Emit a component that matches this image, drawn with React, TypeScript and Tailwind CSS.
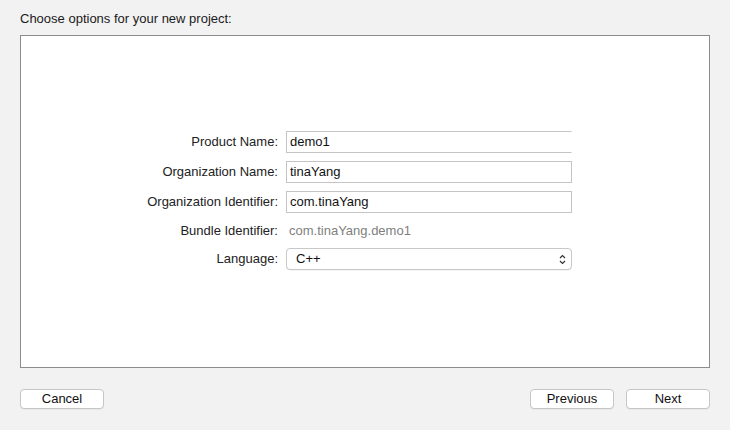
const FONT = "font-['Helvetica_Neue','Liberation_Sans',Arial,sans-serif]";

function Field({ label, value, clipRight }: { label: string; value: string; clipRight?: boolean }) {
  return (
    <>
      <div className="flex h-[22px] items-center justify-end text-[13px] text-[#222]">{label}</div>
      <div
        className={
          "flex h-[22px] items-center border border-[#c4c4c4] bg-white pl-[3px] text-[13px] text-[#111] " +
          (clipRight ? "border-r-transparent" : "")
        }
      >
        {value}
      </div>
    </>
  );
}

function UpDown() {
  return (
    <svg width="7" height="11" viewBox="0 0 7 11" fill="none" stroke="#333" strokeWidth="1.2">
      <path d="M1 4 L3.5 1.5 L6 4" />
      <path d="M1 7 L3.5 9.5 L6 7" />
    </svg>
  );
}

function MacButton({ children }: { children: React.ReactNode }) {
  return (
    <button className="flex h-[20px] w-[84px] items-center justify-center rounded-[4px] border border-[#c6c6c6] bg-white text-[13px] text-[#111] shadow-[0_0.5px_0_rgba(0,0,0,0.08)]">
      {children}
    </button>
  );
}

export default function App() {
  return (
    <div className={"flex h-[430px] w-[730px] flex-col bg-[#f2f2f2] px-[20px] " + FONT}>
      <div className="pt-[11px] text-[13px] leading-[16px] text-[#1a1a1a]">Choose options for your new project:</div>

      <div className="mt-[8px] flex h-[333px] w-[690px] flex-col justify-center border border-[#8c8c8c] bg-white pb-[2px] pl-[109px]">
        <div className="grid grid-cols-[148px_286px] gap-x-[8px] gap-y-[8px]">
          <Field label="Product Name:" value="demo1" clipRight />
          <Field label="Organization Name:" value="tinaYang" />
          <Field label="Organization Identifier:" value="com.tinaYang" />

          <div className="flex h-[19px] items-center justify-end text-[13px] text-[#222]">Bundle Identifier:</div>
          <div className="flex h-[19px] items-center pl-[3px] text-[13px] text-[#808080]">com.tinaYang.demo1</div>

          <div className="flex h-[22px] items-center justify-end text-[13px] text-[#222]">Language:</div>
          <div className="flex h-[22px] items-center justify-between rounded-[4px] border border-[#c8c8c8] bg-white pl-[9px] pr-[5px] text-[13px] text-[#111] shadow-[0_0.5px_0_rgba(0,0,0,0.08)]">
            <span>C++</span>
            <UpDown />
          </div>
        </div>
      </div>

      <div className="mt-[21px] flex items-center justify-between">
        <MacButton>Cancel</MacButton>
        <div className="flex gap-[12px]">
          <MacButton>Previous</MacButton>
          <MacButton>Next</MacButton>
        </div>
      </div>
    </div>
  );
}
